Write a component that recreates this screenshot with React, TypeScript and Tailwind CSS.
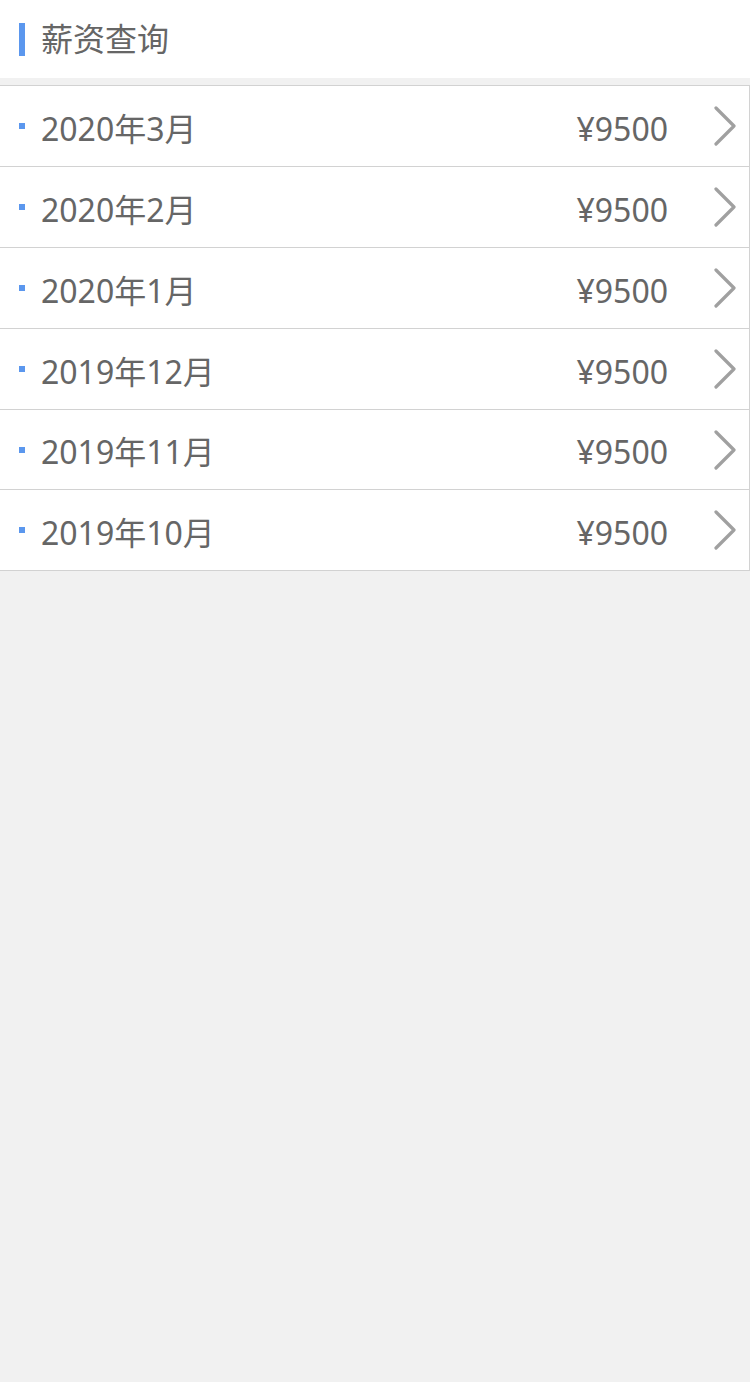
import React from "react";

const rows = [
  { m: "2020年3月", v: "¥9500" },
  { m: "2020年2月", v: "¥9500" },
  { m: "2020年1月", v: "¥9500" },
  { m: "2019年12月", v: "¥9500" },
  { m: "2019年11月", v: "¥9500" },
  { m: "2019年10月", v: "¥9500" },
];

export default function App() {
  return (
    <div
      className="min-h-[1382px] w-[750px] bg-[#f1f1f1] text-[#666666]"
      style={{ fontFamily: '"Noto Sans", "Noto Sans CJK SC", sans-serif' }}
    >
      <div className="flex h-[78px] items-center bg-white pl-[19px]">
        <div className="h-[33px] w-[6px] bg-[#5b97ee]" />
        <div className="ml-[16px] text-[32px] leading-none">薪资查询</div>
      </div>
      <div className="mt-[7px] border-t border-r border-[#d2d2d2] bg-white">
        {rows.map((r, i) => (
          <div
            key={i}
            className={`flex items-center border-b border-[#d2d2d2] pl-[19px] pr-[13px] ${i === 4 ? "h-[80px]" : "h-[81px]"}`}
          >
            <div className="h-[6px] w-[6px] bg-[#5b97ee]" />
            <div className="ml-[16px] flex-1 pt-[5px] text-[32px] leading-none">{r.m}</div>
            <div className="pt-[5px] text-[32px] leading-none">{r.v}</div>
            <svg className="ml-[46px]" width="22" height="40" viewBox="0 0 22 40">
              <path d="M2 2 L20 20 L2 38" fill="none" stroke="#a0a0a0" strokeWidth="3.2" strokeLinecap="round" strokeLinejoin="round" />
            </svg>
          </div>
        ))}
      </div>
    </div>
  );
}
